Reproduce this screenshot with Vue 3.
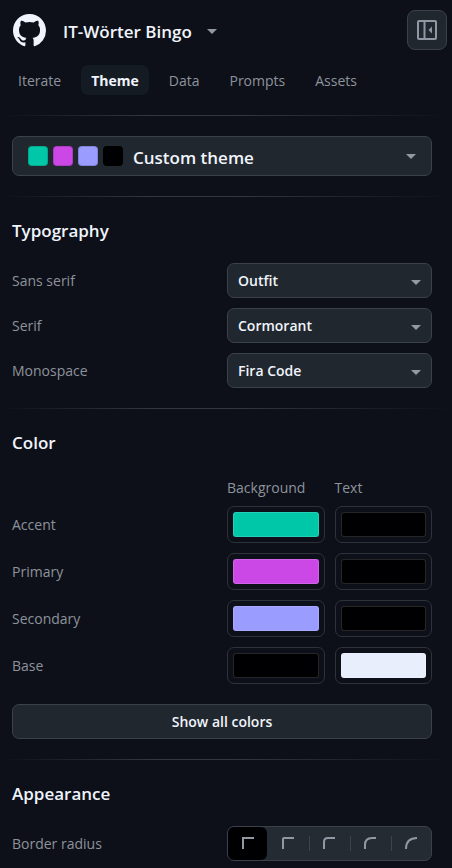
<script setup>
import { reactive, ref } from 'vue'

const tabs = ['Iterate', 'Theme', 'Data', 'Prompts', 'Assets']
const activeTab = ref('Theme')

const fonts = reactive([
  { id: 'sans', label: 'Sans serif', value: 'Outfit', options: ['Outfit'] },
  { id: 'serif', label: 'Serif', value: 'Cormorant', options: ['Cormorant'] },
  { id: 'mono', label: 'Monospace', value: 'Fira Code', options: ['Fira Code'] }
])

const colors = reactive([
  { name: 'Accent', background: '#00c7a8', text: '#000002' },
  { name: 'Primary', background: '#cb48e6', text: '#000002' },
  { name: 'Secondary', background: '#9a9cff', text: '#000002' },
  { name: 'Base', background: '#000002', text: '#e8eefc' }
])

const radius = ref('none')
const radii = [
  { id: 'none', label: 'None', path: 'M2 13V2H13' },
  { id: 'small', label: 'Small', path: 'M2 13V3Q2 2 3 2H13' },
  { id: 'medium', label: 'Medium', path: 'M2 13V6Q2 2 6 2H13' },
  { id: 'large', label: 'Large', path: 'M2 13V9Q2 2 9 2H13' },
  { id: 'full', label: 'Full', path: 'M2 13Q2 2 13 2' }
]
</script>

<template>
  <main class="panel">
    <header class="top">
      <svg class="logo" viewBox="0 0 16 16" aria-hidden="true">
        <path d="M8 0C3.58 0 0 3.58 0 8c0 3.54 2.29 6.53 5.47 7.59.4.07.55-.17.55-.38 0-.19-.01-.82-.01-1.49-2.01.37-2.53-.49-2.69-.94-.09-.23-.48-.94-.82-1.13-.28-.15-.68-.52-.01-.53.63-.01 1.08.58 1.23.82.72 1.21 1.87.87 2.33.66.07-.52.28-.87.51-1.07-1.78-.2-3.64-.89-3.64-3.95 0-.87.31-1.59.82-2.15-.08-.2-.36-1.02.08-2.12 0 0 .67-.21 2.2.82.64-.18 1.32-.27 2-.27s1.36.09 2 .27c1.53-1.04 2.2-.82 2.2-.82.44 1.1.16 1.92.08 2.12.51.56.82 1.27.82 2.15 0 3.07-1.87 3.75-3.65 3.95.29.25.54.73.54 1.48 0 1.07-.01 1.93-.01 2.2 0 .21.15.46.55.38A8.01 8.01 0 0 0 16 8c0-4.42-3.58-8-8-8z" />
      </svg>
      <button class="project" type="button">
        IT-Wörter Bingo
        <svg class="caret" viewBox="0 0 10 5" aria-hidden="true"><path d="M0 0H10L5 5Z" /></svg>
      </button>
      <button class="collapse" type="button" aria-label="Collapse sidebar">
        <svg viewBox="0 0 20 20" aria-hidden="true">
          <rect x="1" y="1" width="18" height="18" rx="1" />
          <path d="M7.500 1V19" />
          <path class="solid" d="M15 6.500V13.500L11.500 10Z" />
        </svg>
      </button>
    </header>

    <nav class="tabs">
      <button
        v-for="tab in tabs"
        :key="tab"
        type="button"
        class="tab"
        :class="{ active: tab === activeTab }"
        @click="activeTab = tab"
      >{{ tab }}</button>
    </nav>

    <section class="section">
      <button class="theme" type="button">
        <span class="chips">
          <span v-for="c in colors" :key="c.name" class="chip" :style="{ backgroundColor: c.background }"></span>
        </span>
        <span class="theme-name">Custom theme</span>
        <svg class="caret" viewBox="0 0 10 5" aria-hidden="true"><path d="M0 0H10L5 5Z" /></svg>
      </button>
    </section>

    <section class="section">
      <h2>Typography</h2>
      <div class="rows">
        <div v-for="font in fonts" :key="font.id" class="row">
          <label :for="font.id">{{ font.label }}</label>
          <div class="select">
            <select :id="font.id" v-model="font.value">
              <option v-for="o in font.options" :key="o">{{ o }}</option>
            </select>
            <svg class="caret" viewBox="0 0 10 5" aria-hidden="true"><path d="M0 0H10L5 5Z" /></svg>
          </div>
        </div>
      </div>
    </section>

    <section class="section">
      <h2>Color</h2>
      <div class="row heads">
        <span></span>
        <div class="pair"><span>Background</span><span>Text</span></div>
      </div>
      <div class="rows">
        <div v-for="c in colors" :key="c.name" class="row">
          <label :for="c.name + '-background'">{{ c.name }}</label>
          <div class="pair">
            <input :id="c.name + '-background'" v-model="c.background" type="color">
            <input v-model="c.text" type="color" :aria-label="c.name + ' text'">
          </div>
        </div>
      </div>
      <button class="show" type="button">Show all colors</button>
    </section>

    <section class="section">
      <h2>Appearance</h2>
      <div class="row">
        <span id="radius-label">Border radius</span>
        <div class="segments" role="radiogroup" aria-labelledby="radius-label">
          <label v-for="r in radii" :key="r.id" class="segment">
            <input v-model="radius" type="radio" name="radius" :value="r.id" :aria-label="r.label">
            <svg viewBox="0 0 14 14" aria-hidden="true"><path :d="r.path" /></svg>
          </label>
        </div>
      </div>
    </section>
  </main>
</template>

<style>
body {
  margin: 0;
  background: #0d1018;
}
</style>

<style scoped>
.panel {
  min-height: 100vh;
  box-sizing: border-box;
  color: #8d939d;
  background: #0d1018;
  font-family: "Open Sans", "Noto Sans", sans-serif;
  font-size: 14px;
  line-height: 20px;
}
.panel *,
.panel *::before {
  box-sizing: border-box;
}
button,
select {
  margin: 0;
  font: inherit;
  color: inherit;
  cursor: pointer;
}
.top {
  display: flex;
  align-items: center;
  height: 60px;
  padding: 0 5px 0 13px;
}
.logo {
  width: 33px;
  height: 33px;
  fill: #f0f4ff;
}
.project {
  display: flex;
  align-items: center;
  gap: 15px;
  margin-left: 17px;
  padding: 3px 0 0;
  border: 0;
  background: none;
  color: #f0f4fc;
  font-size: 17px;
  font-weight: 600;
}
.caret {
  flex: none;
  width: 10px;
  height: 5px;
  fill: #9299a3;
}
.collapse {
  display: grid;
  place-items: center;
  width: 40px;
  height: 40px;
  margin-left: auto;
  padding: 0;
  border: 1px solid #3b4149;
  border-radius: 8px;
  background: #21272e;
}
.collapse svg {
  width: 20px;
  height: 20px;
  fill: none;
  stroke: #9298a3;
  stroke-width: 2;
}
.collapse .solid {
  fill: #9298a3;
  stroke: none;
}
.tabs {
  display: flex;
  gap: 10px;
  padding: 5px 8px 20px;
}
.tab {
  height: 30px;
  padding: 2px 10px 0;
  border: 0;
  border-radius: 7px;
  background: none;
}
.tab.active {
  background: #151b22;
  color: #f0f4fc;
  font-weight: 700;
}
.section {
  padding: 20px 20px 20px 12px;
}
.section::before {
  content: "";
  display: block;
  height: 1px;
  margin: -20px -20px 20px -12px;
  background: linear-gradient(90deg, transparent, #343941 35%, #343941 50%, transparent);
}
h2 {
  margin: 0 0 18px;
  color: #f0f4fc;
  font-size: 17px;
  line-height: 28px;
  font-weight: 600;
}
.theme {
  display: flex;
  align-items: center;
  width: 100%;
  height: 40px;
  padding: 0 15px;
  border: 1px solid #3b4149;
  border-radius: 7px;
  background: #21272e;
}
.chips {
  display: flex;
  gap: 5px;
}
.chip {
  width: 20px;
  height: 20px;
  border: 1px solid rgba(0, 0, 0, 0.15);
  border-radius: 4px;
}
.theme-name {
  margin-left: 10px;
  padding-top: 3px;
  color: #f0f4fc;
  font-size: 17px;
  font-weight: 600;
}
.theme .caret {
  margin-left: auto;
}
.rows {
  display: grid;
  gap: 10px;
}
.row {
  display: grid;
  grid-template-columns: 1fr 1fr;
  gap: 10px;
  align-items: center;
}
.select {
  display: grid;
  align-items: center;
}
.select > * {
  grid-area: 1 / 1;
}
.select select {
  appearance: none;
  width: 100%;
  height: 35px;
  padding: 0 30px 0 10px;
  border: 1px solid #3b4149;
  border-radius: 7px;
  background: #21272e;
  color: #f0f4fc;
  font-weight: 600;
}
.select .caret {
  justify-self: end;
  margin: 4px 11px 0 0;
  pointer-events: none;
}
.heads {
  height: 26px;
  margin-bottom: 5px;
}
.pair {
  display: grid;
  grid-template-columns: 1fr 1fr;
  gap: 10px;
}
input[type="color"] {
  appearance: none;
  width: 100%;
  height: 37px;
  padding: 5px;
  border: 1px solid #2e333b;
  border-radius: 7px;
  background: none;
  cursor: pointer;
}
input[type="color"]::-webkit-color-swatch-wrapper {
  padding: 0;
}
input[type="color"]::-webkit-color-swatch {
  border: 1px solid rgba(255, 255, 255, 0.15);
  border-radius: 3px;
}
.show {
  display: block;
  width: 100%;
  height: 35px;
  margin-top: 20px;
  border: 1px solid #3b4149;
  border-radius: 7px;
  background: #21272e;
  color: #f0f4fc;
  font-weight: 600;
}
.segments {
  display: grid;
  grid-template-columns: 39px repeat(4, 1fr);
  height: 35px;
  border: 1px solid #3b4149;
  border-radius: 7px;
  background: #252b33;
}
.segment {
  display: grid;
  place-items: center;
  cursor: pointer;
}
.segment > * {
  grid-area: 1 / 1;
}
.segment input {
  appearance: none;
  width: 100%;
  height: 100%;
  margin: 0;
  border-radius: 6px;
}
.segment input:checked {
  background: #000003;
}
.segment:nth-child(n + 3)::before {
  content: "";
  grid-area: 1 / 1;
  justify-self: start;
  width: 1px;
  height: 15px;
  margin-left: 1px;
  background: #3e444c;
}
.segment svg {
  width: 14px;
  height: 14px;
  margin-bottom: 2px;
  fill: none;
  stroke: #9298a3;
  stroke-width: 2;
}
</style>
